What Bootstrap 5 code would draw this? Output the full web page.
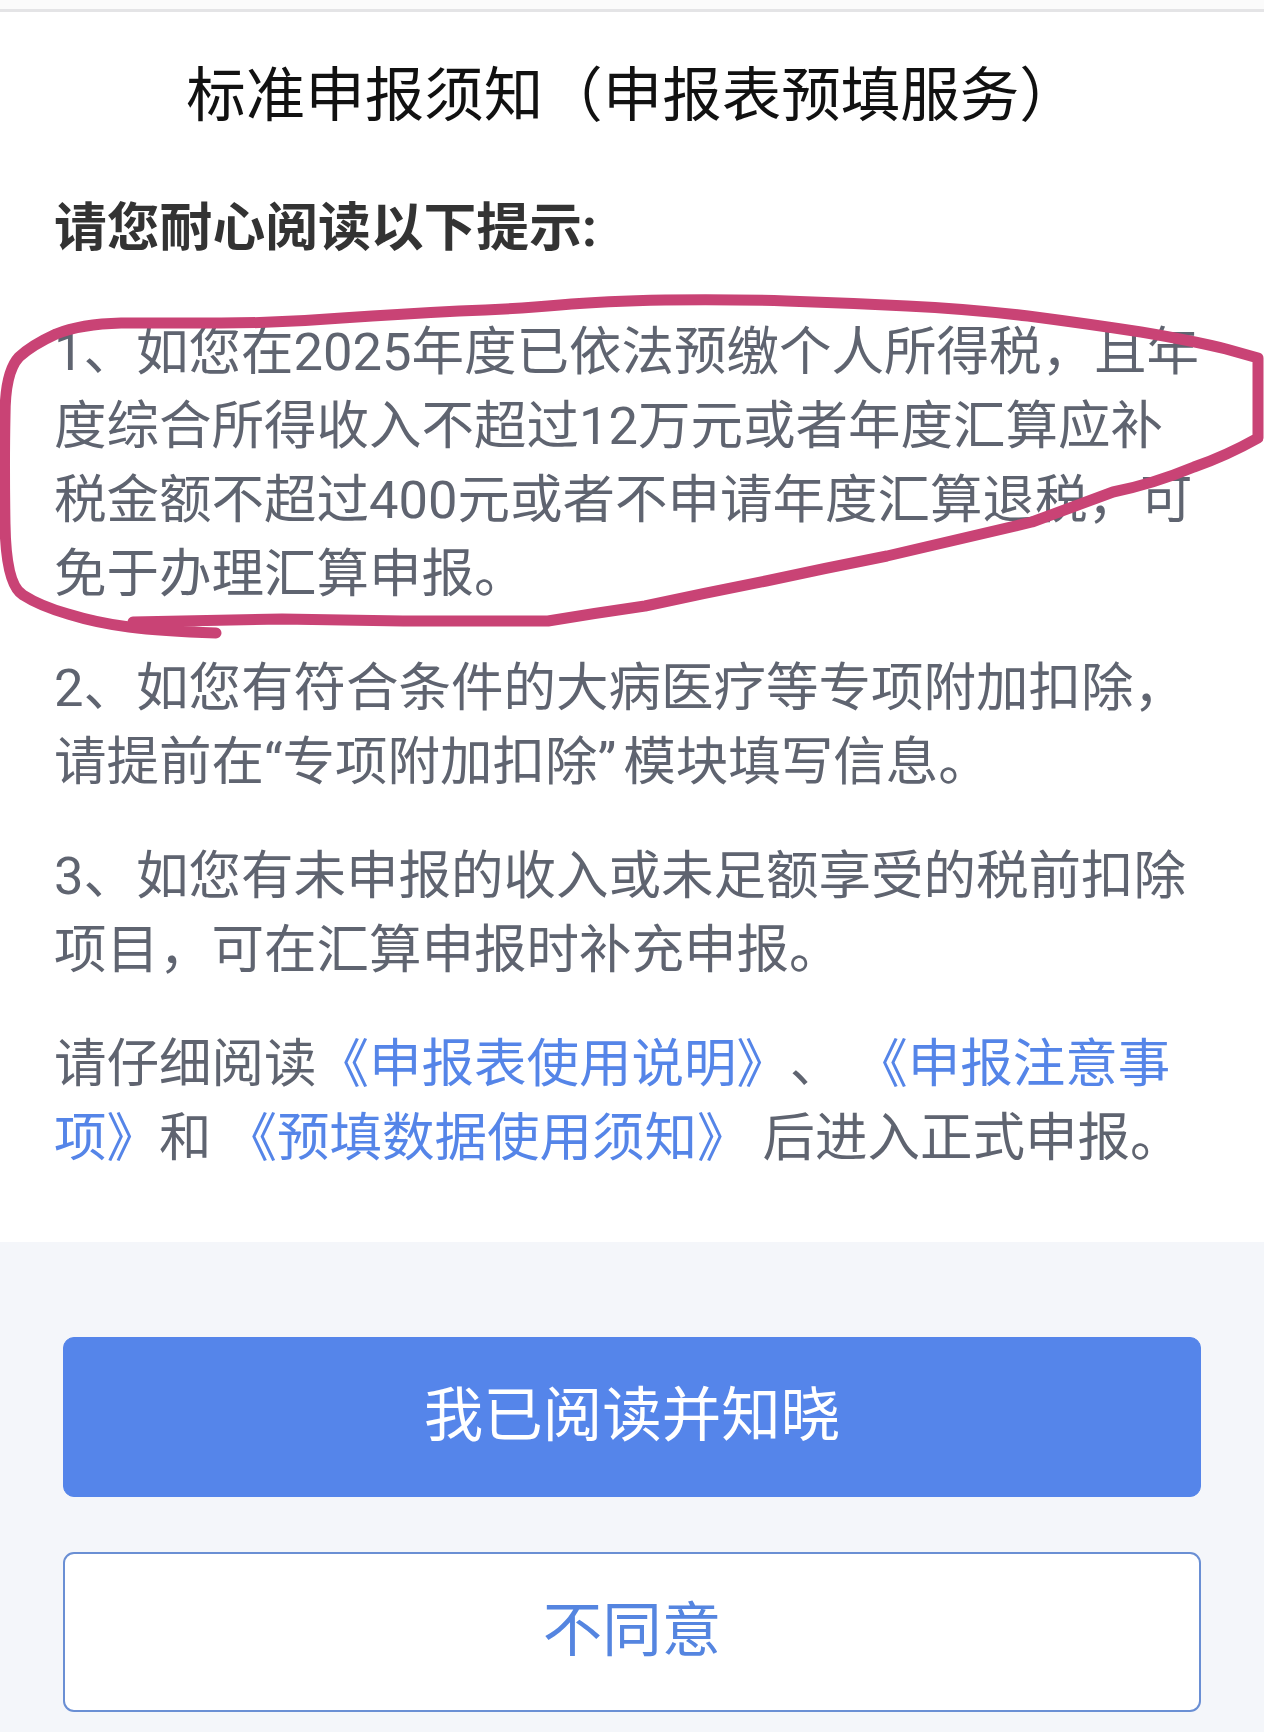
<!DOCTYPE html>
<html lang="zh-CN">
<head>
    <meta charset="UTF-8">
    <meta name="viewport" content="width=device-width, initial-scale=1">
    <title>标准申报须知</title>
    <link href="https://cdn.jsdelivr.net/npm/bootstrap@5.3.0/dist/css/bootstrap.min.css" rel="stylesheet">
    <style>
        body {
            background-color: #f4f6fa;
            font-family: Roboto, "Noto Sans CJK SC", sans-serif;
            overflow: hidden;
        }
        .top-line {
            height: 0;
            box-sizing: content-box;
            border-top: 9px solid #fbfbfb;
            border-bottom: 3px solid #e4e4e6;
        }
        .notice-panel {
            background-color: #fff;
            height: 1230px;
            padding: 47px 54px 0 55px;
        }
        .notice-title {
            font-size: 59.5px;
            line-height: 74px;
            font-weight: 400;
            color: #111;
            text-align: center;
            margin-bottom: 58px;
        }
        .notice-lead {
            font-size: 52.8px;
            line-height: 74px;
            font-weight: 700;
            color: #333;
            margin-bottom: 50px;
            margin-left: -1px;
        }
        .notice-text {
            font-size: 52.5px;
            line-height: 74px;
            color: #5f6470;
            margin-bottom: 40px;
            margin-left: -1px;
        }
        .notice-text a {
            color: #5585e8;
            text-decoration: none;
        }
        .quote-end {
            margin-right: 7px;
        }
        .link-sep {
            margin-left: 27px;
        }
        .action-bar {
            padding: 95px 63px 0;
            gap: 55px;
        }
        .action-btn {
            height: 160px;
            font-size: 59.5px;
            line-height: 1;
            border-radius: 11px;
        }
        .action-ok {
            background-color: #5585ea;
            border-color: #5585ea;
            color: #fff;
        }
        .action-no {
            background-color: #fff;
            border: 2px solid #6a8fd4;
            color: #5585e0;
        }
        .pen-mark {
            position: absolute;
            left: 0;
            top: 0;
            pointer-events: none;
        }
    </style>
</head>
<body>
<div class="top-line"></div>
<div class="notice-panel">
    <h1 class="notice-title">标准申报须知（申报表预填服务）</h1>
    <p class="notice-lead">请您耐心阅读以下提示:</p>
    <p class="notice-text">1、如您在2025年度已依法预缴个人所得税，且年度综合所得收入不超过12万元或者年度汇算应补税金额不超过400元或者不申请年度汇算退税，可免于办理汇算申报。</p>
    <p class="notice-text">2、如您有符合条件的大病医疗等专项附加扣除，请提前在“专项附加扣除<span class="quote-end">”</span>模块填写信息。</p>
    <p class="notice-text">3、如您有未申报的收入或未足额享受的税前扣除项目，可在汇算申报时补充申报。</p>
    <p class="notice-text">请仔细阅读<a href="#">《申报表使用说明》</a><span class="link-sep">、</span>&nbsp;<a href="#">《申报注意事项》</a>和 <a href="#">《预填数据使用须知》</a> 后进入正式申报。</p>
</div>
<div class="action-bar d-flex flex-column">
    <button type="button" class="btn action-btn action-ok">我已阅读并知晓</button>
    <button type="button" class="btn action-btn action-no">不同意</button>
</div>
<!-- 手写圈注 -->
<svg class="pen-mark" width="1264" height="660" viewBox="0 0 1264 660" fill="none">
    <path d="M216 633 Q161 631 129 627 Q97 623 68 614 Q40 606 23 595 Q6 585 5 524 Q4 463 5 416 Q5 372 19 357 Q32 345 56 334 Q81 324 121 323 Q161 323 221 323 Q282 323 342 318 Q403 314 459 311 Q516 309 560 305 Q605 301 665 300 Q726 299 786 301 Q847 303 907 306 Q968 309 1028 316 Q1089 324 1141 332 Q1194 341 1226 349 L1258 358 L1258 438 Q1226 456 1194 467 Q1153 484 1113 492 Q1072 507 1032 522 Q959 539 887 556 Q826 568 766 581 Q705 593 645 606 Q596 613 548 621 Q475 621 403 621 Q342 620 282 619 Q207 620 133 622" stroke="#c94375" stroke-width="11" stroke-linecap="round" stroke-linejoin="round"/>
</svg>
<script src="https://cdn.jsdelivr.net/npm/bootstrap@5.3.0/dist/js/bootstrap.bundle.min.js"></script>
</body>
</html>
